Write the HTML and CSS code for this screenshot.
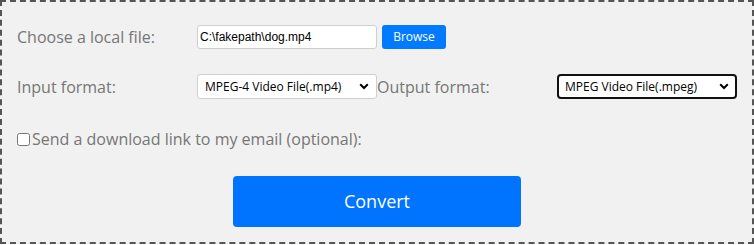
FILE: index.html
```html
<!DOCTYPE html>
<html>
<head>
<meta charset="utf-8">
<link rel="stylesheet" href="styles.css">
</head>
<body>
<div class="box">
  <div class="row row-file">
    <label class="lbl">Choose a local file:</label>
    <input class="file-input" type="text" value="C:\fakepath\dog.mp4">
    <button class="browse">Browse</button>
  </div>
  <div class="row row-format">
    <label class="lbl">Input format:</label>
    <div class="sel">
      <select class="select"><option>MPEG-4 Video File(.mp4)</option></select>
      <svg class="chev" width="10" height="7" viewBox="0 0 10 7"><path d="M1.2 1.3 L5 5 L8.8 1.3" fill="none" stroke="#000" stroke-width="2"/></svg>
    </div>
    <label class="lbl">Output format:</label>
    <div class="sel">
      <select class="select focused"><option>MPEG Video File(.mpeg)</option></select>
      <svg class="chev" width="10" height="7" viewBox="0 0 10 7"><path d="M1.2 1.3 L5 5 L8.8 1.3" fill="none" stroke="#000" stroke-width="2"/></svg>
    </div>
  </div>
  <div class="row row-check">
    <input class="check" type="checkbox" id="em">
    <label class="check-lbl" for="em">Send a download link to my email (optional):</label>
  </div>
  <div class="row-convert">
    <button class="convert">Convert</button>
  </div>
</div>
</body>
</html>
```
FILE: styles.css
```css
html, body {
  margin: 0;
  padding: 0;
  background: #fff;
}
.box {
  box-sizing: border-box;
  width: 754px;
  height: 244px;
  border: 2px dashed #555;
  background: #f1f1f1;
  padding: 22px 15px 0 15px;
  font-family: "Open Sans", sans-serif;
}
.row {
  display: flex;
  align-items: center;
}
.row-file {
  height: 25px;
  margin-bottom: 25px;
}
.row-format {
  height: 25px;
  margin-bottom: 29px;
}
.lbl {
  width: 180px;
  flex: none;
  font-size: 16px;
  color: #767676;
  line-height: 22px;
}
.file-input {
  box-sizing: border-box;
  width: 180px;
  height: 24px;
  margin: 0;
  border: 1px solid #cfcfcf;
  border-radius: 3px;
  background: #fff;
  padding: 0 2px;
  font-family: "Liberation Sans", Arial, sans-serif;
  font-size: 12px;
  color: #000;
}
.browse {
  margin-left: 5px;
  width: 64px;
  height: 24px;
  border: none;
  border-radius: 3px;
  background: #007bff;
  color: #fff;
  font-family: "Open Sans", sans-serif;
  font-size: 12px;
  padding: 0;
}
.sel {
  position: relative;
  width: 180px;
  height: 25px;
  flex: none;
}
.select {
  appearance: none;
  -webkit-appearance: none;
  box-sizing: border-box;
  width: 180px;
  height: 25px;
  margin: 0;
  border: 1px solid #cfcfcf;
  border-radius: 3px;
  background: #fff;
  padding: 0 0 0 7px;
  font-family: "Open Sans", sans-serif;
  font-size: 12px;
  color: #000;
}
.select.focused {
  border: 2px solid #111;
  border-radius: 4px;
  padding-left: 6px;
}
.chev {
  position: absolute;
  right: 8px;
  top: 9px;
}
.row-check {
  height: 22px;
  margin-bottom: 26px;
}
.check {
  width: 13px;
  height: 13px;
  margin: 0 2px 0 0;
}
.check-lbl {
  font-size: 16px;
  color: #767676;
  line-height: 22px;
}
.row-convert {
  display: flex;
  justify-content: center;
  margin-left: -15px;
  margin-right: -15px;
}
.convert {
  width: 288px;
  height: 51px;
  border: none;
  border-radius: 4px;
  background: #0073ff;
  color: #fff;
  font-family: "Open Sans", sans-serif;
  font-size: 18px;
  padding: 0 0 2px 0;
}
```
